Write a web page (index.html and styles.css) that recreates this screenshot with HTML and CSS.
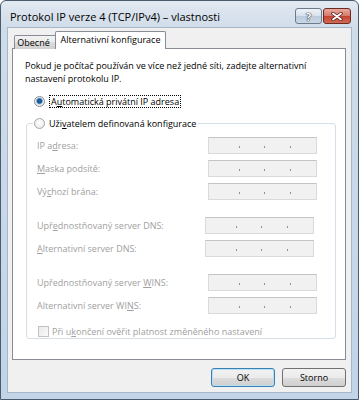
FILE: index.html
```html
<html>

<head>
  <meta name="viewport" content="width=device-width, initial-scale=1.0">
  <link rel="stylesheet" href="styles.css">
</head>

<body>
  <div class="window">
    <div class="titlebar">
      <span class="title">Protokol IP verze 4 (TCP/IPv4) – vlastnosti</span>
      <div class="caption">
        <span class="cap help">?</span>
        <span class="cap close">
          <svg width="12" height="9" viewBox="0 0 12 9">
            <path d="M2 1.5 L10 7.5 M10 1.5 L2 7.5" stroke="#5a2018" stroke-width="3.4" stroke-linecap="round" />
            <path d="M2 1.5 L10 7.5 M10 1.5 L2 7.5" stroke="#fff" stroke-width="1.8" stroke-linecap="round" />
          </svg>
        </span>
      </div>
    </div>
    <div class="client">
      <div class="tabs">
        <a class="tab">Obecné</a>
        <a class="tab select">Alternativní konfigurace</a>
      </div>
      <div class="panel">
        <p class="intro">Pokud je počítač používán ve více než jedné síti, zadejte alternativní<br>nastavení protokolu IP.</p>
        <label class="radio">
          <i class="dot checked"></i>
          <span class="focus">A<u>u</u>tomatická privátní IP adresa</span>
        </label>
        <fieldset class="group">
          <legend class="radio">
            <i class="dot"></i>
            <span>Uži<u>v</u>atelem definovaná konfigurace</span>
          </legend>
          <div class="rows">
            <div class="row"><b>IP a<u>d</u>resa:</b><em class="ip"><i></i><i></i><i></i></em></div>
            <div class="row"><b><u>M</u>aska podsítě:</b><em class="ip"><i></i><i></i><i></i></em></div>
            <div class="row"><b>Vý<u>c</u>hozí brána:</b><em class="ip"><i></i><i></i><i></i></em></div>
            <div class="row sep"><b>Upř<u>e</u>dnostňovaný server DNS:</b><em class="ip dns"><i></i><i></i><i></i></em></div>
            <div class="row"><b><u>A</u>lternativní server DNS:</b><em class="ip dns"><i></i><i></i><i></i></em></div>
            <div class="row sep"><b>Upřednostňovaný server <u>W</u>INS:</b><em class="ip"><i></i><i></i><i></i></em></div>
            <div class="row"><b>Alternativní server WI<u>N</u>S:</b><em class="ip"><i></i><i></i><i></i></em></div>
            <label class="check"><i class="box"></i><span>Při u<u>k</u>ončení ověřit platnost změněného nastavení</span></label>
          </div>
        </fieldset>
      </div>
      <div class="buttons">
        <button class="default">OK</button>
        <button>Storno</button>
      </div>
    </div>
  </div>
</body>

</html>
```

FILE: styles.css
```css
html,
body {
  margin: 0;
  padding: 0;
  background: #fff;
}

body * {
  box-sizing: border-box;
  font-family: "Open Sans", "Noto Sans", sans-serif;
  font-size: 9px;
  color: #000;
  white-space: nowrap;
}

.window {
  width: 359px;
  height: 400px;
  border: 1px solid #4a5b6d;
  border-radius: 6px 6px 0 0;
  padding: 0 7px 7px;
  display: flex;
  flex-direction: column;
  background: linear-gradient(to bottom, #e2e9f1 0, #cfdce9 28px, #c1d4e8 100%);
}

.titlebar {
  height: 27px;
  display: flex;
  justify-content: space-between;
  align-items: flex-start;
}

.title {
  font-size: 11px;
  padding: 8px 0 0 2px;
  line-height: 15px;
}

.caption {
  display: flex;
  gap: 1px;
  margin-top: 7px;
}

.cap {
  display: flex;
  align-items: center;
  justify-content: center;
  height: 16px;
  border: 1px solid #6c7b8b;
  border-radius: 3px;
}

.help {
  width: 27px;
  font-size: 11px;
  font-weight: bold;
  color: #fff;
  text-shadow: 0 0 1px #2f3a46, 0 0 1px #2f3a46, 0 0 1px #2f3a46;
  background: linear-gradient(to bottom, #eef2f7 0, #d7e1ec 50%, #bccbdc 50%, #c9d7e6 100%);
}

.close {
  width: 28px;
  border-color: #6d2a22;
  background: linear-gradient(to bottom, #e8a99e 0, #d7786a 50%, #c4402f 50%, #d06a54 100%);
}

.client {
  flex: 1;
  background: #f0f0f0;
  box-shadow: 0 0 0 1px #a6b7c9;
  padding: 4px 5px 0 4px;
  display: flex;
  flex-direction: column;
}

/* tabs */

.tabs {
  display: flex;
  align-items: flex-end;
  height: 17px;
  padding-left: 2px;
  margin-bottom: -1px;
  position: relative;
  z-index: 1;
}

.tab {
  height: 14px;
  width: 43px;
  padding-right: 4px;
  text-align: center;
  line-height: 13px;
  border: 1px solid #898c95;
  border-bottom: none;
  border-radius: 2px 2px 0 0;
  background: linear-gradient(to bottom, #f2f2f2 0, #ebebeb 50%, #dddddd 50%, #cfcfcf 100%);
}

.tab.select {
  height: 18px;
  width: 111px;
  padding-right: 0;
  margin-left: -2px;
  line-height: 15px;
  background: #fff;
  position: relative;
}

.panel {
  height: 312px;
  background: #fff;
  border: 1px solid #898c95;
  padding: 10px 0 0 12px;
}

.intro {
  margin: 0;
  line-height: 13px;
}

.radio {
  display: flex;
  align-items: center;
  height: 13px;
  line-height: 13px;
}

.panel>.radio {
  margin: 10px 0 0 9px;
}

.dot {
  width: 11px;
  height: 11px;
  border-radius: 50%;
  border: 1px solid #a4a6a8;
  background: radial-gradient(circle at 50% 40%, #fff 0, #e6e6e6 100%);
  margin-right: 4px;
}

.dot.checked {
  border-color: #8a8c8e;
  background: radial-gradient(circle at 50% 45%, #2f6fb0 0, #184c84 2px, #7cb3e6 3px, #eef1f4 3.8px, #dcdcdc 100%);
}

.focus {
  border: 1px dotted #000;
  padding: 0 1px;
  line-height: 11px;
}

.group {
  margin: 9px 0 0 1px;
  padding: 0;
  width: 310px;
  height: 222px;
  border: 1px solid #d5dfe5;
  border-radius: 3px;
}

.group legend {
  padding: 0 2px 0 1px;
  margin-left: 6px;
}

.rows {
  padding: 7px 0 0 10px;
}

.row {
  display: flex;
  justify-content: space-between;
  align-items: center;
  height: 17px;
  margin-top: 6px;
  padding-right: 18px;
}

.row:first-child {
  margin-top: 0;
}

.row.sep {
  margin-top: 17px;
}

.row b,
.check span {
  font-weight: normal;
  color: #a0a0a0;
}

.row b u,
.check span u {
  color: #a0a0a0;
}

.ip {
  width: 109px;
  height: 17px;
  display: flex;
  justify-content: space-evenly;
  padding: 0 1px 0 5px;
  background: #f1f1f1;
  border: 1px solid #dadada;
  border-top-color: #c4c4c4;
}

.ip.dns {
  margin-right: 3px;
}

.ip i {
  width: 1px;
  height: 2px;
  margin-top: 8px;
  background: #8f8f8f;
}

.check {
  display: flex;
  align-items: center;
  height: 13px;
  margin-top: 11px;
  padding-left: 1px;
}

.box {
  width: 11px;
  height: 11px;
  border: 1px solid #c2c2c2;
  background: linear-gradient(to bottom right, #e9e9e9, #fafafa);
  margin-right: 3px;
}

/* buttons */

.buttons {
  display: flex;
  justify-content: flex-end;
  gap: 7px;
  margin-top: 8px;
}

button {
  width: 64px;
  height: 19px;
  padding: 0;
  border: 1px solid #707070;
  border-radius: 3px;
  background: linear-gradient(to bottom, #f2f2f2 0, #ebebeb 50%, #dddddd 50%, #cfcfcf 100%);
}

button.default {
  border-color: #3c7fb1;
  box-shadow: inset 0 0 0 1px #b6e0f5;
}
```
